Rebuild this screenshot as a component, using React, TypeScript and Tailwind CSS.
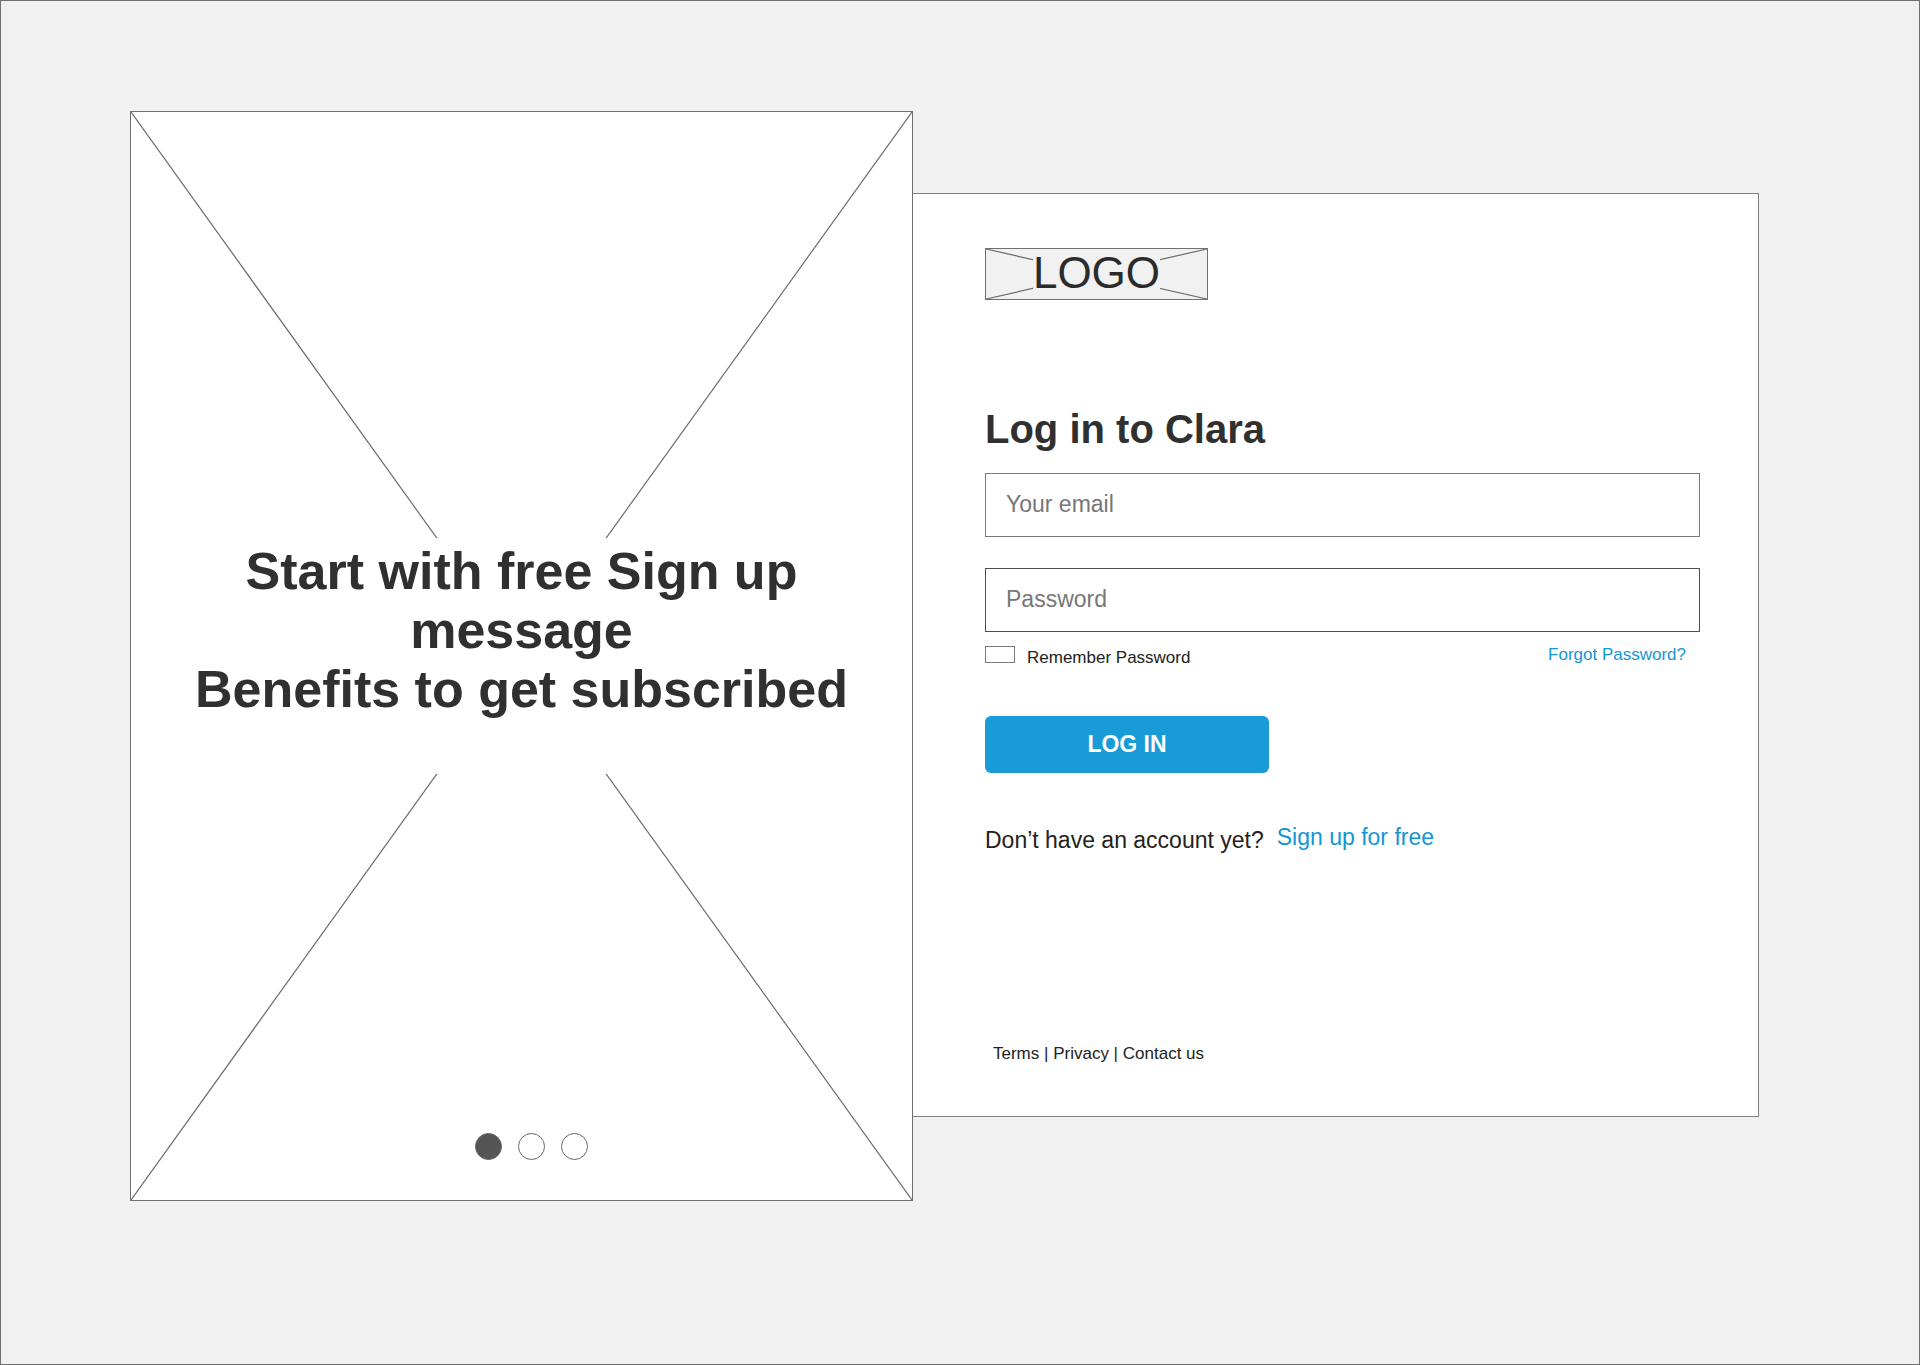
import React, { useState } from 'react';

const SLIDES = ['Sign up message', 'Benefits', 'Subscription'];

const FOOTER_LINKS = ['Terms', 'Privacy', 'Contact us'];

// Crossed lines that mark a placeholder area, stretched to the parent box
const CrossedLines: React.FC = () => (
  <svg
    className="absolute inset-0 w-full h-full text-[#6b6b6b]"
    viewBox="0 0 100 100"
    preserveAspectRatio="none"
    stroke="currentColor"
    aria-hidden="true"
  >
    <line x1="0" y1="0" x2="100" y2="100" strokeWidth="1.2" vectorEffect="non-scaling-stroke" />
    <line x1="100" y1="0" x2="0" y2="100" strokeWidth="1.2" vectorEffect="non-scaling-stroke" />
  </svg>
);

const PromoPanel: React.FC = () => {
  const [activeSlide, setActiveSlide] = useState(0);

  return (
    <section className="relative flex flex-col justify-center min-h-[1090px] border border-[#707070] bg-white">
      <CrossedLines />
      <div className="relative min-h-[236px] px-10 pt-1 bg-white">
        <h2 className="text-center text-[52px] leading-[59px] font-bold text-[#303030]">
          Start with free Sign up message
          <br />
          Benefits to get subscribed
        </h2>
      </div>
      <div className="absolute inset-x-0 bottom-10 flex justify-center gap-4 pl-5">
        {SLIDES.map((slide, index) => (
          <button
            key={slide}
            type="button"
            aria-label={slide}
            onClick={() => setActiveSlide(index)}
            className={`size-[27px] rounded-full border border-[#666666] ${index === activeSlide ? 'bg-[#555555]' : 'bg-white'}`}
          />
        ))}
      </div>
    </section>
  );
};

const Logo: React.FC = () => (
  <div className="relative flex items-center justify-center w-[223px] h-[52px] border border-[#707070] bg-[#f1f1f1]">
    <CrossedLines />
    <span className="relative bg-[#f1f1f1] pb-[2px] text-[44px] leading-[30px] text-[#2b2b2b]">LOGO</span>
  </div>
);

const LoginCard: React.FC = () => {
  const [email, setEmail] = useState('');
  const [password, setPassword] = useState('');
  const [remember, setRemember] = useState(false);

  return (
    <section className="flex flex-col min-h-[924px] mt-[82px] pt-[54px] pr-[58px] pb-[52px] pl-[72px] border border-l-0 border-[#808080] bg-white">
      <Logo />

      <form onSubmit={(e) => e.preventDefault()} className="mt-[105px]">
        <h1 className="text-[40px] leading-[48px] font-bold text-[#303030]">Log in to Clara</h1>

        <div className="flex flex-col gap-[31px] mt-5">
          <input
            type="email"
            aria-label="Your email"
            placeholder="Your email"
            value={email}
            onChange={(e) => setEmail(e.target.value)}
            className="w-full h-16 px-5 pb-[2px] border border-[#7a7a7a] text-[23px] text-[#222222] placeholder:text-[#777777]"
          />
          <input
            type="password"
            aria-label="Password"
            placeholder="Password"
            value={password}
            onChange={(e) => setPassword(e.target.value)}
            className="w-full h-16 px-5 pb-[2px] border border-[#4d4d4d] text-[23px] text-[#222222] placeholder:text-[#777777]"
          />
        </div>

        <div className="flex justify-between h-[23px] mt-[13px] pr-[14px] text-[17px] leading-5">
          <label className="flex items-baseline self-end gap-3 text-[#222222]">
            <input
              type="checkbox"
              checked={remember}
              onChange={(e) => setRemember(e.target.checked)}
              className="appearance-none w-[30px] h-[17px] border border-[#7a7a7a] bg-white checked:bg-[#555555]"
            />
            Remember Password
          </label>
          <a href="#forgot" className="self-start text-[#1296d4]">Forgot Password?</a>
        </div>

        <button
          type="submit"
          className="block w-[284px] h-[57px] mt-12 rounded-md bg-[#189bd6] text-[23px] font-bold text-white"
        >
          LOG IN
        </button>
      </form>

      <div className="flex gap-[13px] h-[31px] mt-[50px] text-[23px] leading-[28px]">
        <p className="self-end text-[#222222]">Don’t have an account yet?</p>
        <a href="#signup" className="self-start text-[#1296d4]">Sign up for free</a>
      </div>

      <footer className="mt-auto pl-2 text-[17px] leading-5 text-[#222222]">
        {FOOTER_LINKS.map((link, index) => (
          <React.Fragment key={link}>
            {index > 0 && ' | '}
            <a href="#">{link}</a>
          </React.Fragment>
        ))}
      </footer>
    </section>
  );
};

const App: React.FC = () => {
  return (
    <main className="grid grid-cols-[783fr_846fr] items-start min-h-screen pt-[110px] pr-[160px] pb-20 pl-[129px] border border-[#707070] bg-[#f1f1f1] font-['Liberation_Sans',Arial,sans-serif]">
      <PromoPanel />
      <LoginCard />
    </main>
  );
};

export default App;
